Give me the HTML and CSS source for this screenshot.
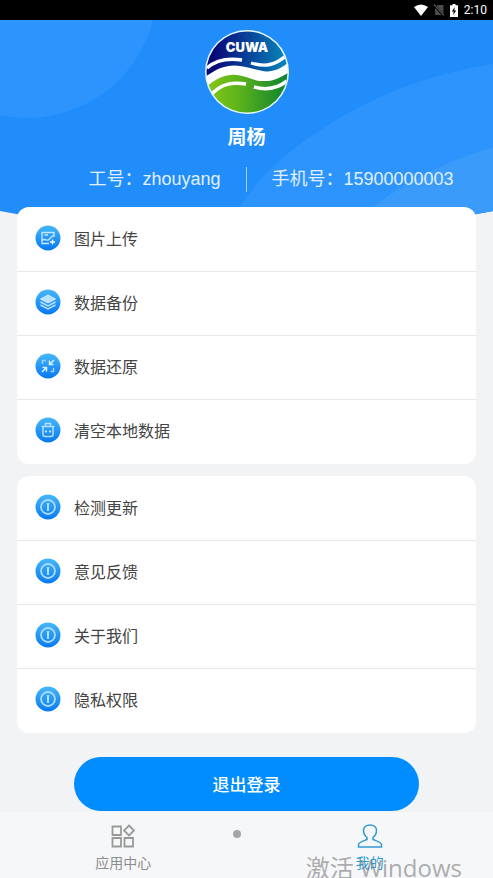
FILE: index.html
```html
<!DOCTYPE html>
<html lang="zh-CN">
<head>
<meta charset="utf-8">
<meta name="viewport" content="width=device-width, initial-scale=1">
<title>我的</title>
<link rel="stylesheet" href="styles.css">
</head>
<body>
<svg class="defs" width="0" height="0" aria-hidden="true">
  <defs>
    <linearGradient id="badge" x1="0" y1="0" x2="0" y2="1"><stop offset="0" stop-color="#45b8f8"/><stop offset="1" stop-color="#0878f3"/></linearGradient>
    <symbol id="info" viewBox="0 0 26 26">
      <circle cx="13" cy="13" r="12.5" fill="url(#badge)"/>
      <circle cx="13" cy="13" r="7" fill="none" stroke="#a8daff" stroke-width="1.8"/>
      <path d="M13 9v8" stroke="#d8f0ff" stroke-width="1.6"/>
    </symbol>
  </defs>
</svg>
<div class="app">
  <div class="status">
    <svg width="14" height="12" viewBox="0 0 14 12"><path d="M0 3Q7-2 14 3L7 12Z" fill="#fff"/></svg>
    <svg width="10" height="12" viewBox="0 0 10 12"><path d="M3.5 1H9.5V11H1V4Z" fill="#4b4b4b"/><path d="M0 1L10 12" stroke="#000" stroke-width="2.4"/><path d="M0 .5L10 11.5" stroke="#666" stroke-width="1.1"/></svg>
    <svg width="8" height="13" viewBox="0 0 8 13"><path d="M2.5 0h3v1.3H8V13H0V1.300h2.500Z" fill="#fff"/><path d="M4.800 3L1.800 7.500H3.700L3.200 11L6.200 6.500H4.300Z" fill="#000"/></svg>
    <span>2:10</span>
  </div>

  <header class="hero">
    <svg class="hero-art" viewBox="0 0 493 200" preserveAspectRatio="none" aria-hidden="true">
      <circle cx="27" cy="-32" r="130" fill="#2d94fd"/>
      <path d="M231 200Q260 154 290 132Q378 62 493 44V200Z" fill="#2d94fd"/>
      <path d="M358 200Q410 152 493 127V200Z" fill="#3a9bfb"/>
    </svg>
    <svg class="avatar" viewBox="0 0 84 84" role="img" aria-label="CUWA">
      <defs>
        <clipPath id="disc"><circle cx="42" cy="42" r="40.500"/></clipPath>
        <linearGradient id="sky" x1="0" y1="0" x2="1" y2="0"><stop offset=".1" stop-color="#090877"/><stop offset=".55" stop-color="#07489d"/><stop offset="1" stop-color="#078bbb"/></linearGradient>
        <linearGradient id="land" x1="0" y1="0" x2="1" y2="0"><stop offset="0" stop-color="#88c917"/><stop offset=".4" stop-color="#5db31b"/><stop offset="1" stop-color="#0b8130"/></linearGradient>
      </defs>
      <circle cx="42" cy="42" r="42" fill="#e4f9ff"/>
      <g clip-path="url(#disc)">
        <path d="M0 0H84V84H0Z" fill="#fff"/>
        <path d="M0 0H84V32C68 46 57 41 45 38C27 33 17 35 0 47Z" fill="url(#sky)"/>
        <path d="M0 58C18 42 30 43 44 48C60 54 71 51 84 42V84H0Z" fill="url(#land)"/>
        <path d="M2 38C12 29 24 28 37 30M46 33C62 38 71 34 82 25" fill="none" stroke="#fff" stroke-width="3.400"/>
        <path d="M5 66C16 53 28 52 41 54M49 57C63 61 73 58 82 51" fill="none" stroke="#fff" stroke-width="3.600"/>
      </g>
      <text class="logo-text" x="42" y="22" text-anchor="middle">CUWA</text>
    </svg>
    <h1>周杨</h1>
    <div class="facts"><span class="job">工号：zhouyang</span><span class="phone">手机号：15900000003</span></div>
  </header>

  <main>
    <nav class="card" aria-label="数据">
      <a href="#upload"><svg class="icon" viewBox="0 0 26 26"><circle cx="13" cy="13" r="12.500" fill="url(#badge)"/><g fill="none" stroke="#c5e8ff" stroke-width="1.300"><path d="M19 12V7.500H7V18.500H14"/><path d="M7 15.500C10 12.500 12 17 14 14.500S17 11.500 19 10M9.500 10H13"/><path d="M17.500 14.500v5M15 17h5" stroke="#fff"/></g></svg>图片上传</a>
      <a href="#backup"><svg class="icon" viewBox="0 0 26 26"><circle cx="13" cy="13" r="12.500" fill="url(#badge)"/><path d="M13 6L20.500 10L13 14L5.500 10Z" fill="#b5e0ff" stroke="#d4efff"/><path d="M5.500 13L13 17L20.500 13M5.500 16L13 20L20.500 16" fill="none" stroke="#b5e0ff" stroke-width="1.500"/></svg>数据备份</a>
      <a href="#restore"><svg class="icon" viewBox="0 0 26 26"><circle cx="13" cy="13" r="12.500" fill="url(#badge)"/><path d="M11 7.500H7.500V11M15.500 18.500H18.500V15" fill="none" stroke="#9bd3ff" stroke-width="1.500"/><path d="M19 7L14.500 11.500M14.500 7.500V11.500H18.500M7 19L11.500 14.500M7.500 14.500H11.500V18.500" fill="none" stroke="#d8f0ff" stroke-width="1.500"/></svg>数据还原</a>
      <a href="#clear"><svg class="icon" viewBox="0 0 26 26"><circle cx="13" cy="13" r="12.500" fill="url(#badge)"/><path d="M6.500 9.500H19.500M10.500 9V6.500H15.500V9M8 10V17.500Q8 19.500 10 19.500H16Q18 19.500 18 17.500V10" fill="none" stroke="#b5e0ff" stroke-width="1.500"/><path d="M10 13.500h2v2h-2zM14 13.500h2v2h-2z" fill="#c5e8ff"/></svg>清空本地数据</a>
    </nav>
    <nav class="card" aria-label="关于">
      <a href="#update"><svg class="icon"><use href="#info"/></svg>检测更新</a>
      <a href="#feedback"><svg class="icon"><use href="#info"/></svg>意见反馈</a>
      <a href="#about"><svg class="icon"><use href="#info"/></svg>关于我们</a>
      <a href="#privacy"><svg class="icon"><use href="#info"/></svg>隐私权限</a>
    </nav>
    <button class="logout" type="button">退出登录</button>
  </main>

  <nav class="tabs">
    <a href="#apps"><svg width="24" height="24" viewBox="0 0 24 24" fill="none" stroke="#999" stroke-width="1.800"><path d="M1.500 2.500h8.500v8.500H1.500zM1.500 14h8.500v8.500H1.500zM13.500 14h8.500v8.500H13.500zM18 1.500L23 6.500L18 11.500L13 6.500Z"/></svg>应用中心</a>
    <a href="#me" class="current"><svg width="26" height="24" viewBox="0 0 26 24" fill="none" stroke="#3399cf" stroke-width="1.500"><path d="M10 13.500C7.500 11.500 6.500 9 6.500 6.500C6.500 3 9.500 1 13 1S19.500 3 19.500 6.500C19.500 9 18.500 11.500 16 13.500V15.500C21 17.500 24.500 18.500 24.500 20.500V23H1.500V20.500C1.500 18.500 5 17.500 10 15.500Z"/></svg>我的</a>
    <span class="dot"></span>
    <span class="watermark">激活 Windows</span>
  </nav>
</div>
</body>
</html>
```
FILE: styles.css
```css
* { box-sizing: border-box; }
body {
  margin: 0;
  background: #f1f3f5;
  color: #444;
  font-family: "Liberation Sans", "Noto Sans CJK SC", sans-serif;
}
a { color: inherit; text-decoration: none; }
.defs { position: absolute; }
.app { display: flex; flex-direction: column; min-height: 100vh; }

.status {
  display: flex;
  align-items: center;
  justify-content: flex-end;
  gap: 6px;
  height: 20px;
  padding-right: 6px;
  background: #000;
  color: #fff;
  font: 12px/20px Roboto, sans-serif;
}

.hero {
  position: relative;
  display: flex;
  flex-direction: column;
  align-items: center;
  height: 200px;
  padding-top: 10px;
  background: #208dfb;
  color: #fff;
  clip-path: polygon(0 0, 100% 0, 100% 191px, 90% 100%, 10% 100%, 0 191px);
}
.hero-art { position: absolute; inset: 0; width: 100%; height: 100%; }
.avatar { position: relative; flex: none; width: 84px; height: 84px; }
.logo-text { fill: #fff; font: 900 13px Inter, sans-serif; }
h1 { position: relative; margin: 10px 0 0; font-size: 19px; line-height: 28px; }
.facts {
  position: relative;
  display: grid;
  grid-template-columns: 1fr 1fr;
  width: 100%;
  margin-top: 15px;
  font-size: 18px;
  line-height: 25px;
  color: #e0f0ff;
  white-space: nowrap;
}
.job { padding-right: 25px; text-align: right; border-right: 1px solid #9fd0ff; }
.phone { padding-left: 25px; }

main {
  position: relative;
  display: flex;
  flex-direction: column;
  flex: 1;
  gap: 12px;
  margin-top: -13px;
  padding: 0 17px;
}
.card { padding-bottom: 1px; background: #fff; border-radius: 12px; }
.card a {
  display: flex;
  align-items: center;
  gap: 13px;
  height: 64px;
  padding: 0 18px 3px;
  font-size: 16px;
}
.card a + a { border-top: 1px solid #e8e9eb; }
.icon { width: 26px; height: 26px; }
.logout {
  width: 75%;
  height: 54px;
  margin: 12px auto 0;
  padding: 0 0 2px;
  border: 0;
  border-radius: 27px;
  background: #018dff;
  color: #fff;
  font: 500 17px "Noto Sans CJK SC", sans-serif;
}

.tabs {
  position: relative;
  display: grid;
  grid-template-columns: 1fr 1fr;
  height: 66px;
  overflow: hidden;
  background: #f6f7f9;
  color: #8c8c8c;
  font-size: 14px;
  line-height: 20px;
}
.tabs a { display: flex; flex-direction: column; align-items: center; gap: 5px; padding-top: 12px; }
.tabs .current { color: #2c98d2; }
.dot {
  position: absolute;
  top: 18px;
  left: calc(48% - 4px);
  width: 8px;
  height: 8px;
  border-radius: 50%;
  background: #a5a5a5;
}
.watermark {
  position: absolute;
  right: 31px;
  bottom: -7px;
  color: rgba(120, 120, 120, .6);
  font: 24px/34px "Open Sans", "Noto Sans CJK SC", sans-serif;
  white-space: nowrap;
  pointer-events: none;
}
```
